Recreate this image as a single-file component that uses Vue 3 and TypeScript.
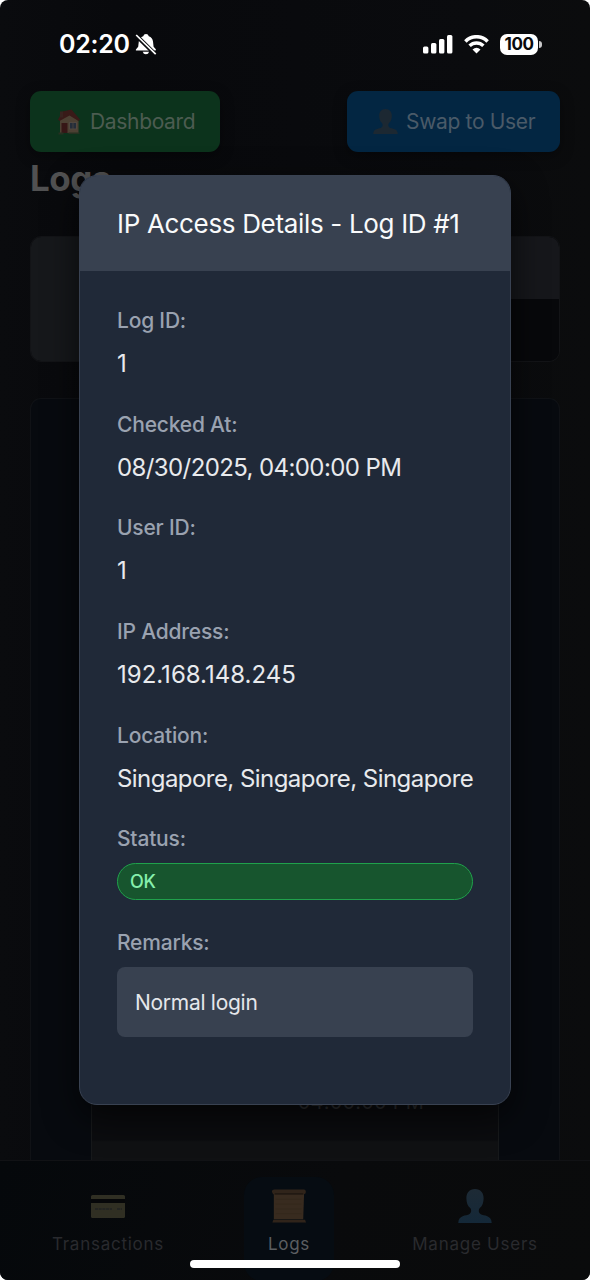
<script setup lang="ts">
interface Field {
  label: string
  value: string
  tone: string
}

const fields: Field[] = [
  { label: 'Log ID:', value: '1', tone: 'plain' },
  { label: 'Checked At:', value: '08/30/2025, 04:00:00 PM', tone: 'date' },
  { label: 'User ID:', value: '1', tone: 'plain' },
  { label: 'IP Address:', value: '192.168.148.245', tone: 'ip' },
  { label: 'Location:', value: 'Singapore, Singapore, Singapore', tone: 'place' },
]
</script>

<template>
  <div class="screen">
    <header class="status-bar">
      <div class="clock">
        <span class="time">02:20</span>
        <svg class="bell" viewBox="0 0 22 22">
          <path d="M1 17.6Q0.5 17.2 1.1 16.2L3.2 13.8 3.8 8.4Q4.5 4.5 8.2 3.3Q8.8 1.1 11 1.1T13.8 3.3Q17.5 4.5 18 8.5L18.6 13.8 20.8 16.2Q21.6 17.6 19.8 17.6Z" fill="#fff" />
          <path d="M7.7 18.7H14.1Q13.4 21.2 10.9 21.2T7.7 18.7Z" fill="#fff" />
          <path d="M1 2.2L20.4 21.4" stroke="#0a0b0e" stroke-width="4.2" />
          <path d="M1.2 2L20.7 21.2" stroke="#fff" stroke-width="1.7" />
        </svg>
      </div>
      <div class="signals">
        <svg class="bars" viewBox="0 0 30 19">
          <rect x="0" y="11.5" width="5.4" height="7" rx="1.5" />
          <rect x="8" y="8" width="5.4" height="10.5" rx="1.5" />
          <rect x="16" y="4" width="5.4" height="14.5" rx="1.5" />
          <rect x="24" y="0" width="5.4" height="18.5" rx="1.5" />
        </svg>
        <svg class="wifi" viewBox="0 0 25 19" fill="none" stroke="#fff">
          <path d="M1.4 6.4C7.6 .1 17.4 .1 23.6 6.4" stroke-width="3.5" />
          <path d="M5.6 10.8C9.4 7 15.6 7 19.4 10.8" stroke-width="3.4" />
          <path d="M12.5 18.5L8.5 14.4Q12.5 11 16.5 14.4Z" fill="#fff" stroke="none" />
        </svg>
        <div class="battery"><span class="level">100</span></div>
      </div>
    </header>

    <main class="page">
      <div class="actions">
        <div class="btn green">
          <svg class="house" viewBox="0 0 24 27">
            <path d="M3 11L12 4 21.5 13V25H3Z" fill="#4c4033" />
            <path d="M1 11.5L5.5 3.5 14.5 1.5 23 11.5 21.5 13 12.5 7.5 2.5 13Z" fill="#391a18" />
            <path d="M3 3.5h3v6H3Z" fill="#38231f" />
            <rect x="4.5" y="15" width="6" height="10" fill="#361616" />
            <rect x="12.5" y="14.5" width="7" height="6.5" fill="#242d3a" stroke="#514840" />
            <path d="M16 14.5v6.5" stroke="#514840" stroke-width=".7" />
            <path d="M1.5 24.5h5v2h-5zM11.5 24.5h11v1.5h-11z" fill="#273021" />
          </svg>
          <span class="dash-text">Dashboard</span>
        </div>
        <div class="btn blue">
          <svg class="person small" viewBox="0 0 34 34">
            <path d="M17 0C11.5 0 8.2 4 8.4 9.5C8.5 13.2 9.5 17 12.2 19C13.4 20.2 13.8 23.5 11.6 25C8.3 27 .3 26 .3 34H33.7C33.7 26 25.7 27 22.4 25C20.2 23.5 20.6 20.2 21.8 19C24.5 17 25.5 13.2 25.6 9.5C25.8 4 22.5 0 17 0Z" fill="#1c2832" />
          </svg>
          <span class="swap-text">Swap to User</span>
        </div>
      </div>
      <h1>Logs</h1>
      <section class="filters">
        <div class="filter-label"></div>
        <div class="filter-body"><div class="filter-head"></div></div>
      </section>
      <section class="log-list">
        <div class="log-card"><span class="behind-time">04:00:00 PM</span></div>
      </section>
    </main>

    <nav class="tabs">
      <div class="tab tab-card">
        <svg viewBox="0 0 36 36">
          <rect x="1" y="7" width="34" height="23" rx="1.5" fill="#302f23" />
          <rect x="1" y="11" width="34" height="4" fill="#060709" />
          <path d="M5 21h17M27 21h5" stroke="#202323" stroke-width="1.5" stroke-dasharray="3 .7" />
        </svg>
        <span>Transactions</span>
      </div>
      <div class="tab tab-logs">
        <svg viewBox="0 0 38 38">
          <path d="M3 4H35L34 33H3Z" fill="#382b1f" />
          <path d="M5 12h27M5 17h27M5 22h27M5 27h27" stroke="#32271c" stroke-width=".7" />
          <path d="M1 3.8Q1 1.5 3.5 1.5H35Q37.5 2 36.5 5.5L34 7H5Q1.5 7.5 1 3.8Z" fill="#30241a" />
          <path d="M4 6.2H34" stroke="#1d1611" stroke-width="1.3" />
          <path d="M2.5 33.5H36L37 36.5H1.5Z" fill="#30241a" />
        </svg>
        <span>Logs</span>
      </div>
      <div class="tab tab-users">
        <svg class="person" viewBox="0 0 34 34">
          <defs><linearGradient id="personShade" x2="0" y2="1"><stop stop-color="#1d2a35" /><stop offset="1" stop-color="#142838" /></linearGradient></defs>
          <path d="M17 0C11.5 0 8.2 4 8.4 9.5C8.5 13.2 9.5 17 12.2 19C13.4 20.2 13.8 23.5 11.6 25C8.3 27 .3 26 .3 34H33.7C33.7 26 25.7 27 22.4 25C20.2 23.5 20.6 20.2 21.8 19C24.5 17 25.5 13.2 25.6 9.5C25.8 4 22.5 0 17 0Z" fill="url(#personShade)" />
        </svg>
        <span>Manage Users</span>
      </div>
    </nav>

    <div class="dialog" role="dialog">
      <div class="dialog-head"><h2>IP Access Details - Log ID #1</h2></div>
      <div class="dialog-body">
        <div v-for="field in fields" :key="field.label" class="field">
          <span class="label">{{ field.label }}</span>
          <span class="value" :class="field.tone">{{ field.value }}</span>
        </div>
        <div class="status-field">
          <span class="label">Status:</span>
          <div class="pill"><span>OK</span></div>
        </div>
        <div class="remarks-field">
          <span class="label">Remarks:</span>
          <div class="remarks"><span>Normal login</span></div>
        </div>
      </div>
    </div>
    <div class="home-indicator"></div>
  </div>
</template>

<style>
body {
  background: #fff;
}
</style>

<style scoped>
* {
  box-sizing: border-box;
}
.screen {
  position: relative;
  display: flex;
  flex-direction: column;
  width: 590px;
  height: 1280px;
  overflow: hidden;
  border-radius: 8px;
  background: linear-gradient(90deg, #0a0b0e, #08090c 20%, #0a0b0e 80%, #0b0c0d);
  font-family: Inter, "Liberation Sans", sans-serif;
  white-space: nowrap;
}
.status-bar {
  display: flex;
  justify-content: space-between;
  flex: none;
  height: 91px;
  padding: 30px 48px 0 59px;
}
.clock,
.signals {
  display: flex;
  align-items: center;
  height: 28px;
}
.time {
  width: 76px;
  color: #fff;
  font-size: 25px;
  font-weight: 600;
  letter-spacing: -0.3px;
}
.bell {
  width: 22px;
  height: 22px;
}
.bars {
  width: 30px;
  height: 19px;
  fill: #fff;
}
.wifi {
  width: 25px;
  height: 19px;
  margin: 0 11px 0 11px;
}
.battery {
  position: relative;
  display: grid;
  place-items: center;
  width: 38px;
  height: 21px;
  margin-right: 4px;
  border-radius: 7px;
  background: #fff;
  color: #090a0c;
  font-size: 17px;
  font-weight: 700;
  letter-spacing: -0.4px;
}
.battery::after {
  position: absolute;
  right: -4px;
  top: 7px;
  width: 3px;
  height: 7px;
  border-radius: 0 3px 3px 0;
  background: #c9c9ca;
  content: "";
}
.page {
  display: flex;
  flex-direction: column;
  flex: 1;
  min-height: 0;
  padding: 0 30px;
}
.actions {
  display: flex;
  justify-content: space-between;
}
.btn {
  display: flex;
  align-items: center;
  height: 61px;
  border-radius: 11px;
  font-size: 21px;
  letter-spacing: -0.33px;
  box-shadow: 0 4px 14px rgb(0 0 0 / 35%);
}
.green {
  width: 190px;
  padding-left: 27px;
  background: #0c331c;
  color: #4c5c51;
}
.blue {
  width: 213px;
  padding-left: 26px;
  background: #032642;
  color: #4a5a68;
}
.house {
  width: 24px;
  height: 27px;
  margin-right: 9px;
}
.person.small {
  width: 25px;
  height: 27px;
  margin-right: 8px;
}
h1 {
  height: 42px;
  margin: 5px 0 0;
  color: #515152;
  font-size: 35px;
  font-weight: 700;
  letter-spacing: -0.5px;
  line-height: 42px;
}
.filters {
  display: flex;
  flex: none;
  height: 126px;
  margin-top: 37px;
  overflow: hidden;
  border: 1px solid #131417;
  border-radius: 11px;
}
.filter-label {
  width: 140px;
  background: #16181b;
}
.filter-body {
  flex: 1;
  background: #07080b;
}
.filter-head {
  height: 62px;
  background: #16171b;
}
.log-list {
  display: flex;
  flex: 1;
  margin-top: 36px;
  padding: 0 60px;
  border: 1px solid #101216;
  border-bottom: 0;
  border-radius: 11px 11px 0 0;
  background: #070a0f;
}
.log-card {
  display: flex;
  flex: 1;
  align-items: flex-end;
  justify-content: flex-end;
  padding: 0 74px 46px 0;
  border: 1px solid #17191b;
  border-width: 0 1px;
  background: linear-gradient(#0b0c0f calc(100% - 20px), #101113 calc(100% - 18px));
}
.behind-time {
  color: #303134;
  font-size: 20px;
  letter-spacing: 0.2px;
}
.tabs {
  display: flex;
  flex: none;
  height: 120px;
  padding-top: 16px;
  border-top: 1px solid #111215;
  background: linear-gradient(110deg, #05080b, #090a0c 55%, #0a0b0c);
}
.tab {
  display: flex;
  flex-direction: column;
  align-items: center;
  height: 104px;
  padding-top: 11px;
  color: #292a2e;
  font-size: 17px;
  letter-spacing: 0.75px;
}
.tab svg {
  width: 36px;
  height: 36px;
  margin-bottom: 8px;
}
.tab span {
  line-height: 24px;
}
.tab-card {
  width: 136px;
  margin-left: 40px;
}
.tab-logs {
  width: 90px;
  margin-left: 68px;
  border-radius: 18px;
  background: #060c12;
  color: #5b5e61;
}
.tab-logs svg {
  width: 38px;
}
.tab-users {
  width: 146px;
  margin-left: 68px;
}
.tab-users svg {
  width: 34px;
}
.dialog {
  position: absolute;
  top: 175px;
  left: 79px;
  display: flex;
  flex-direction: column;
  width: 432px;
  height: 930px;
  overflow: hidden;
  border: 1px solid #394252;
  border-radius: 18px;
  background: #202938;
  box-shadow: 0 12px 34px rgb(0 0 0 / 65%);
}
.dialog-head {
  display: flex;
  align-items: center;
  flex: none;
  height: 95px;
  padding-left: 37px;
  background: #384150;
}
h2 {
  margin: 0;
  color: #f9fafb;
  font-size: 26px;
  font-weight: 400;
  letter-spacing: -0.33px;
}
.dialog-body {
  display: flex;
  flex-direction: column;
  padding: 34px 37px;
}
.field {
  display: flex;
  flex-direction: column;
  height: 103.7px;
}
.label {
  height: 32px;
  color: #9aa2b0;
  font-size: 21px;
  font-weight: 500;
  letter-spacing: -0.2px;
  line-height: 32px;
}
.value {
  margin-top: 9px;
  color: #e8eaed;
  font-size: 24px;
  line-height: 36px;
}
.date {
  letter-spacing: -0.6px;
}
.place {
  letter-spacing: -0.55px;
}
.status-field,
.remarks-field {
  display: flex;
  flex-direction: column;
}
.pill {
  display: flex;
  align-items: center;
  height: 37px;
  margin-top: 8px;
  padding-left: 12px;
  border: 1.5px solid #20a14c;
  border-radius: 19px;
  background: #17552e;
  color: #86efac;
  font-size: 18px;
  font-weight: 500;
  letter-spacing: -0.3px;
}
.remarks-field {
  margin-top: 27px;
}
.remarks {
  display: flex;
  align-items: center;
  height: 70px;
  margin-top: 8px;
  padding-left: 18px;
  border-radius: 8px;
  background: #384150;
  color: #e5e7eb;
  font-size: 21px;
  letter-spacing: -0.28px;
}
.home-indicator {
  position: absolute;
  bottom: 12px;
  left: 190px;
  width: 210px;
  height: 8px;
  border-radius: 4px;
  background: #fff;
}
</style>
